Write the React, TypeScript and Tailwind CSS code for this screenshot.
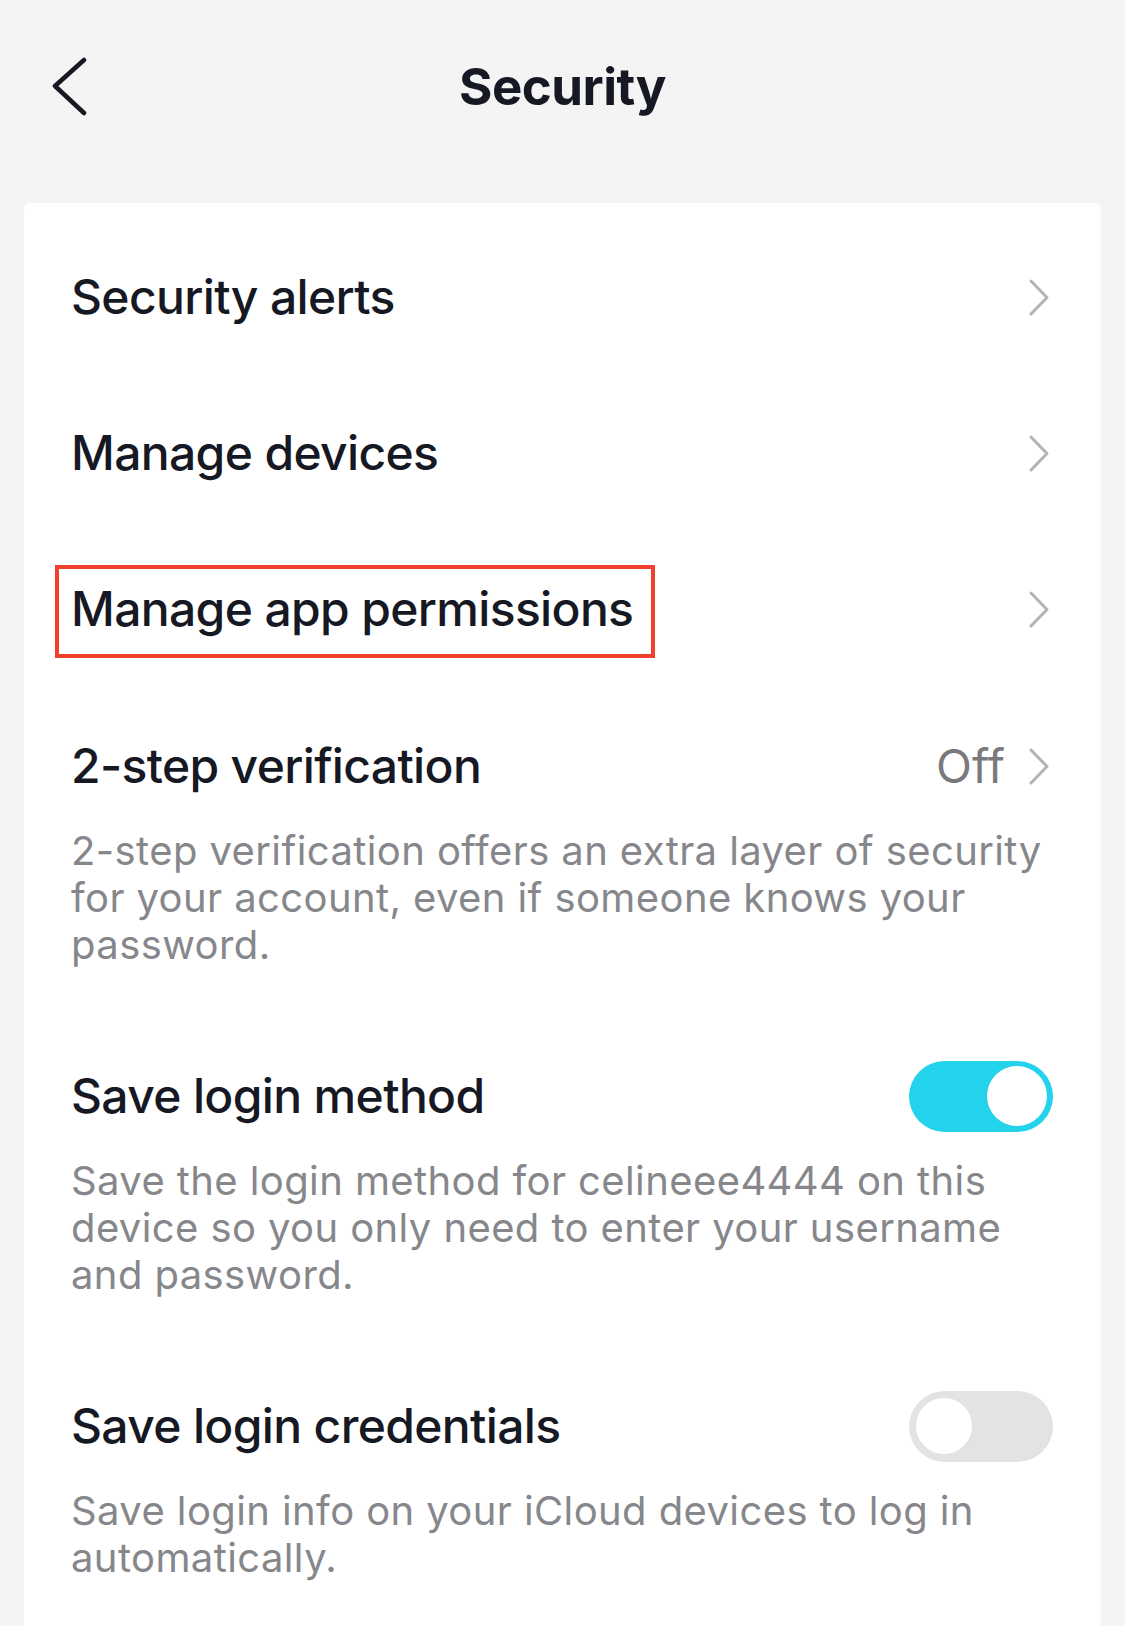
import React from "react";

const font = { fontFamily: 'Inter, "Noto Sans", sans-serif' };

function Chevron() {
  return (
    <svg width="24" height="39" viewBox="0 0 24 39" fill="none" className="shrink-0">
      <path d="M4 3 L20 19.5 L4 36" stroke="#b3b3b3" strokeWidth="3" strokeLinecap="round" strokeLinejoin="round" />
    </svg>
  );
}

function Toggle({ on }: { on: boolean }) {
  return on ? (
    <div className="flex h-[71px] w-[144px] shrink-0 items-center justify-end rounded-full bg-[#22d3eb] px-[6px]">
      <div className="h-[60px] w-[60px] rounded-full bg-white" />
    </div>
  ) : (
    <div className="flex h-[71px] w-[144px] shrink-0 items-center justify-start rounded-full bg-[#e3e3e3] px-[4px]">
      <div className="h-[62px] w-[62px] rounded-full border-[3px] border-[#e3e3e3] bg-white" />
    </div>
  );
}

function NavRow({ label, boxed }: { label: string; boxed?: boolean }) {
  return (
    <div className="flex h-[156px] items-center justify-between">
      <span className="relative text-[48px] font-medium leading-[56px] tracking-[-0.65px] text-[#161823]">
        {label}
        {boxed && (
          <span className="pointer-events-none absolute -left-[16px] -right-[22px] -top-[16px] -bottom-[21px] border-[4px] border-[#f0412f]" />
        )}
      </span>
      <div className="pr-[2px]">
        <Chevron />
      </div>
    </div>
  );
}

function Desc({ children }: { children: React.ReactNode }) {
  return (
    <p className="mt-[22px] text-[40px] leading-[47px] tracking-[0.4px] text-[#86878b]">{children}</p>
  );
}

export default function App() {
  return (
    <div className="min-h-[1626px] w-full overflow-hidden bg-[#f4f4f4]" style={font}>
      <div className="grid h-[174px] grid-cols-[1fr_auto_1fr] items-center px-[50px]">
        <div className="flex items-center">
          <svg width="40" height="60" viewBox="0 0 40 60" fill="none">
            <path d="M34 3 L5 29 L34 56" stroke="#161823" strokeWidth="4.5" strokeLinecap="round" strokeLinejoin="round" />
          </svg>
        </div>
        <h1 className="text-[51px] font-bold leading-[60px] tracking-[-0.5px] text-[#161823]">Security</h1>
        <div />
      </div>
      <div className="mx-[24px] mt-[29px] min-h-[1450px] rounded-[6px] bg-white pl-[47px] pr-[48px] pt-[16px]">
        <NavRow label="Security alerts" />
        <NavRow label="Manage devices" />
        <NavRow label="Manage app permissions" boxed />

        <div className="pt-[40px]">
          <div className="flex h-[78px] items-center justify-between">
            <span className="text-[48px] font-medium leading-[56px] tracking-[-0.65px] text-[#161823]">2-step verification</span>
            <div className="flex items-center gap-[22px] pr-[2px]">
              <span className="text-[47px] leading-[56px] text-[#7a7a7e]">Off</span>
              <Chevron />
            </div>
          </div>
          <Desc>2-step verification offers an extra layer of security for your account, even if someone knows your password.</Desc>
        </div>

        <div className="pt-[89px]">
          <div className="flex h-[78px] items-center justify-between">
            <span className="text-[48px] font-medium leading-[56px] tracking-[-0.65px] text-[#161823]">Save login method</span>
            <Toggle on />
          </div>
          <Desc>Save the login method for celineee4444 on this device so you only need to enter your username and password.</Desc>
        </div>

        <div className="pt-[89px]">
          <div className="flex h-[78px] items-center justify-between">
            <span className="text-[48px] font-medium leading-[56px] tracking-[-0.65px] text-[#161823]">Save login credentials</span>
            <Toggle on={false} />
          </div>
          <Desc>Save login info on your iCloud devices to log in automatically.</Desc>
        </div>
      </div>
    </div>
  );
}
